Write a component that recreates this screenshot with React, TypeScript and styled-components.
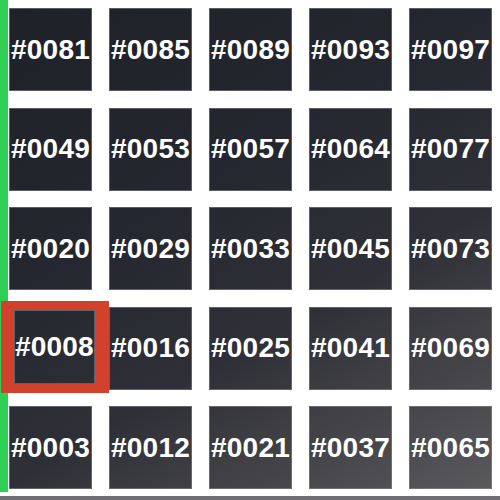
import React from "react";
import styled, { createGlobalStyle } from "styled-components";

const Global = createGlobalStyle`
  html, body { margin: 0; padding: 0; background: #ffffff; overflow: hidden; }
  body { font-family: "Liberation Sans", Arial, sans-serif; }
`;

const Page = styled.div`
  width: 500px;
  height: 500px;
  display: flex;
  flex-direction: column;
  background: #ffffff;
`;

const Main = styled.div`
  display: flex;
  height: 492px;
`;

const GreenBar = styled.div`
  width: 8px;
  flex: none;
  background: #2fcf55;
`;

const Grid = styled.div`
  display: grid;
  grid-template-columns: repeat(5, 83px);
  grid-auto-rows: 83px;
  column-gap: 17px;
  row-gap: 16.6px;
  padding: 8px 0 0 1px;
`;

const Cell = styled.div`
  position: relative;
  display: flex;
`;

const Tile = styled.div<{ $selected?: boolean }>`
  flex: 1;
  display: flex;
  align-items: center;
  justify-content: center;
  box-sizing: border-box;
  border: 1px solid rgba(140, 140, 148, 0.55);
  background: linear-gradient(150deg, #1f2128 0%, #252730 38%, #2f3037 62%, #444448 80%, #5c5b5e 100%);
  background-attachment: fixed;
  color: #ffffff;
  font-weight: 700;
  font-size: 28px;
  letter-spacing: 0.2px;
  white-space: nowrap;
  overflow: visible;
`;

const Selection = styled.div`
  flex: 1;
  display: flex;
  margin: -6px -13px -3px -8px;
  border-style: solid;
  border-color: #d2412c;
  border-width: 9px 14px 9px 13px;
`;

const Footer = styled.div`
  margin-top: 4px;
  height: 4px;
  background: #6e6e72;
`;

const rows = [
  ["0081", "0085", "0089", "0093", "0097"],
  ["0049", "0053", "0057", "0064", "0077"],
  ["0020", "0029", "0033", "0045", "0073"],
  ["0008", "0016", "0025", "0041", "0069"],
  ["0003", "0012", "0021", "0037", "0065"],
];

export default function App() {
  return (
    <>
      <Global />
      <Page>
        <Main>
          <GreenBar />
          <Grid>
            {rows.flat().map((n) => (
              <Cell key={n}>
                {n === "0008" ? (
                  <Selection>
                    <Tile>#{n}</Tile>
                  </Selection>
                ) : (
                  <Tile>#{n}</Tile>
                )}
              </Cell>
            ))}
          </Grid>
        </Main>
        <Footer />
      </Page>
    </>
  );
}
